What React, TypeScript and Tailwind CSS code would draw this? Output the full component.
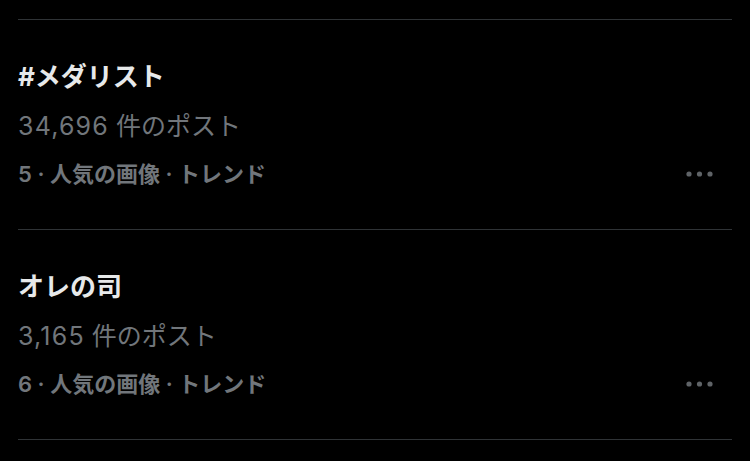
import React from "react";

const rows = [
  { title: "#メダリスト", count: "34,696", rank: "5" },
  { title: "オレの司", count: "3,165", rank: "6" },
];

function Dots() {
  return (
    <svg width="30" height="8" viewBox="0 0 30 8" className="block">
      <circle cx="4" cy="4" r="2.6" fill="#5f6367" />
      <circle cx="14.5" cy="4" r="2.6" fill="#5f6367" />
      <circle cx="25" cy="4" r="2.6" fill="#5f6367" />
    </svg>
  );
}

export default function App() {
  return (
    <div
      className="w-[750px] h-[461px] bg-black overflow-hidden px-[18px] pt-[19px]"
      style={{ fontFamily: 'Inter, "Noto Sans CJK JP", "Noto Sans", sans-serif' }}
    >
      {rows.map((r, i) => (
        <div key={i} className="border-t border-[#2f3336] pt-[33px] pb-[32px]">
          <div className="text-[26px] leading-[48px] font-bold text-[#e7e9ea]">{r.title}</div>
          <div className="text-[25px] leading-[50px] text-[#71767b]">
            <span className="tracking-[1.2px]">{r.count}</span> 件のポスト
          </div>
          <div className="flex items-center justify-between leading-[46px]">
            <div className="text-[22px] font-semibold text-[#71767b]">
              {r.rank} · 人気の画像 · トレンド
            </div>
            <div className="mr-[17px]">
              <Dots />
            </div>
          </div>
        </div>
      ))}
      <div className="border-t border-[#2f3336]" />
    </div>
  );
}
